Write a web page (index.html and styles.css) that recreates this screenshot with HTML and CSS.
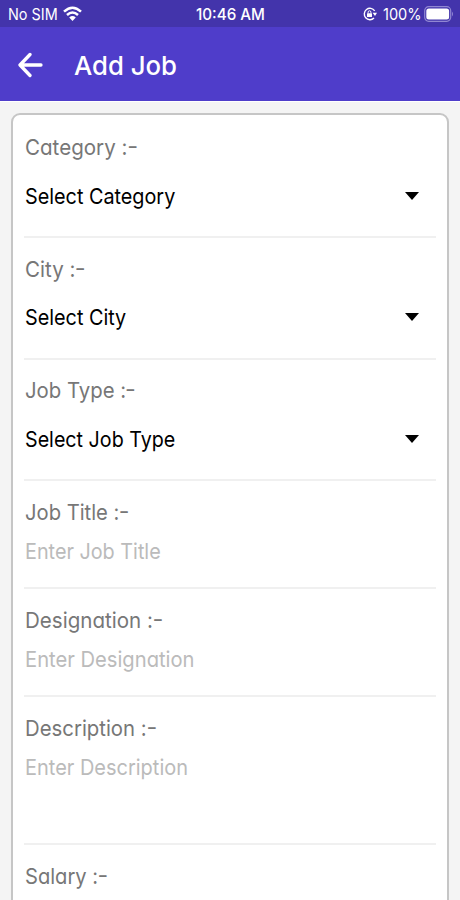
FILE: index.html
```html
<!DOCTYPE html>
<html lang="en">
<head>
<meta charset="utf-8">
<title>Add Job</title>
<link rel="stylesheet" href="styles.css">
</head>
<body>
<div class="status">
  <div class="side">
    <span class="carrier">No SIM</span>
    <svg class="wifi" width="19" height="16" viewBox="0 0 19 16" fill="none" stroke="#fff" stroke-width="2.5"><path d="M1 5.6Q9.500-2.200 18 5.600M4 9Q9.500 3.900 15 9"/><path d="M9.500 15L6.200 11.500Q9.500 8.700 12.800 11.500Z" fill="#fff" stroke="none"/></svg>
  </div>
  <span class="time">10:46 AM</span>
  <div class="side right">
    <svg class="lock" width="14" height="14" viewBox="0 0 14 14" fill="none" stroke="#fff"><path d="M11.700 3.800A5.700 5.700 0 1 0 11 11.100" stroke-width="1.400"/><path d="M9.600 5.700H14L12 9Z" fill="#fff" stroke="none"/><rect x="4" y="6.200" width="5" height="3.800" rx=".5" fill="#fff" stroke="none"/><path d="M5.100 6.500V5.200a1.400 1.400 0 0 1 2.800 0V6.500"/></svg>
    <span class="percent">100%</span>
    <svg class="battery" width="30" height="16" viewBox="0 0 30 16"><rect x=".7" y=".7" width="26" height="14.600" rx="4" fill="none" stroke="#9187d2" stroke-width="1.200"/><rect x="2.300" y="2.500" width="22.800" height="11" rx="2.500" fill="#fff"/><path d="M28 5.500Q30 8 28 10.500Z" fill="#9187d2"/></svg>
  </div>
</div>
<header class="bar">
  <svg width="26" height="26" viewBox="0 0 26 26" fill="none" stroke="#fff" stroke-width="3.300" stroke-linecap="round" stroke-linejoin="round"><path d="M12 2.500L2 13L12 23.500M2.500 13H23"/></svg>
  <h1>Add Job</h1>
</header>
<main class="card">
  <section class="field choice"><label class="w-category">Category :<b>-</b></label><div class="value"><span class="w-scategory">Select Category</span><i class="caret"></i></div></section>
  <section class="field choice"><label class="w-city">City :<b>-</b></label><div class="value"><span class="w-scity">Select City</span><i class="caret"></i></div></section>
  <section class="field choice"><label class="w-type">Job Type :<b>-</b></label><div class="value"><span class="w-stype">Select Job Type</span><i class="caret"></i></div></section>
  <section class="field entry"><label class="w-title">Job Title :<b>-</b></label><div class="hint"><span class="w-etitle">Enter Job Title</span></div></section>
  <section class="field entry"><label class="w-desig">Designation :<b>-</b></label><div class="hint"><span class="w-edesig">Enter Designation</span></div></section>
  <section class="field entry tall"><label class="w-desc">Description :<b>-</b></label><div class="hint"><span class="w-edesc">Enter Description</span></div></section>
  <section class="field entry"><label class="w-salary">Salary :<b>-</b></label></section>
</main>
</body>
</html>
```
FILE: styles.css
```css
* { box-sizing: border-box; }
body { margin: 0; height: 900px; overflow: hidden; background: #f4f4f4; font-family: Inter, "Liberation Sans", sans-serif; }
.status { height: 27px; padding: 0 6px 0 8px; display: grid; grid-template-columns: 1fr auto 1fr; align-items: center; background: #4334ab; color: #fff; font-size: 16px; line-height: 28px; }
.side { display: flex; align-items: center; }
.right { justify-content: flex-end; }
.carrier, .percent { display: block; transform-origin: left; white-space: nowrap; }
.carrier { width: 55px; transform: scaleX(.9); }
.percent { width: 41px; margin-left: 6px; transform: scaleX(.91); }
.time { font-weight: 500; width: 69px; margin-left: -2px; white-space: nowrap; transform: scaleX(.95); transform-origin: left; }
.bar { height: 75px; padding: 1px 18px 0; display: flex; align-items: center; gap: 30px; background: #4f3dca; border-bottom: 1px solid #fff; }
.bar h1 { margin: 2px 0 0; color: #fff; font-size: 26px; font-weight: 450; line-height: 32px; transform: scaleX(.99); transform-origin: left; font-feature-settings: "cv11"; }
.card { margin: 11px 11px 0; height: 810px; padding: 1.500px 11px 0; border: 2px solid #c6c6c6; border-radius: 9px; background: #fff; overflow: hidden; }
.field { border-bottom: 2px solid #f0f0f0; padding-top: 16.500px; font-size: 22px; line-height: 28px; white-space: nowrap; }
.choice { height: 121.500px; }
.entry { height: 108px; }
.tall { height: 148.400px; }
label, .value span, .hint span { display: block; width: max-content; margin-left: .7px; transform-origin: left; }
label, .hint { font-feature-settings: "cv11"; font-weight: 380; }
label { color: #777; }
label b { display: inline-block; font-weight: inherit; line-height: 1; transform: translateY(-1px) scaleX(1.15); }
.value { margin-top: 20.600px; display: flex; align-items: center; justify-content: space-between; padding-right: 17px; color: #000; }
.hint { margin-top: 11.200px; color: #bbb; }
.caret { border: 7.500px solid transparent; border-top: 8px solid #000; border-bottom: 0; }
.w-category { transform: scaleX(.935); }
.w-city { transform: scaleX(.935); }
.w-type { transform: scaleX(.925); }
.w-title { transform: scaleX(.918); }
.w-desig { transform: scaleX(.935); }
.w-desc { transform: scaleX(.925); }
.w-salary { transform: scaleX(.915); }
.w-scategory { transform: scaleX(.9); }
.w-scity { transform: scaleX(.9); }
.w-stype { transform: scaleX(.895); }
.w-etitle { transform: scaleX(.9); }
.w-edesig { transform: scaleX(.917); }
.w-edesc { transform: scaleX(.908); }
```
